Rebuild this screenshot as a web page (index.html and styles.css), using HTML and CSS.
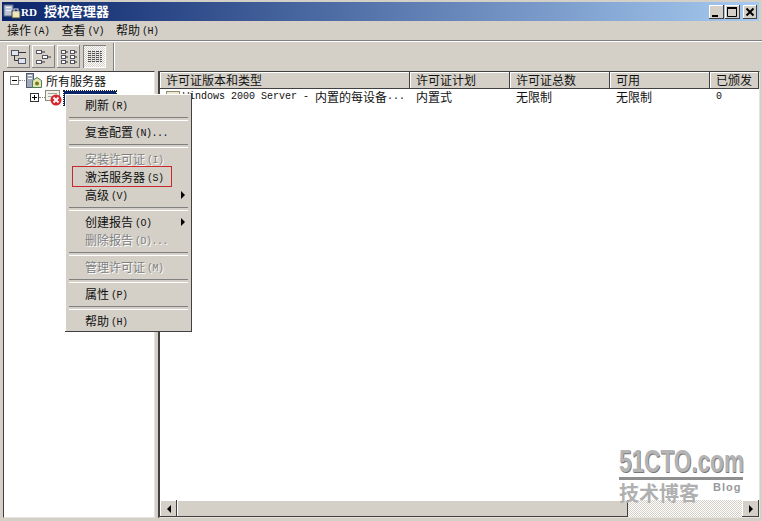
FILE: index.html
```html
<!DOCTYPE html>
<html lang="zh">
<head>
<meta charset="utf-8">
<title>RD 授权管理器</title>
<link rel="stylesheet" href="styles.css">
</head>
<body>
<div class="window">
  <header class="titlebar">
    <svg class="appicon" width="18" height="16" viewBox="0 0 18 16"><rect x="1" y="1" width="9" height="11" fill="#b9c4d4" stroke="#5a6a80"/><rect x="3" y="3" width="5" height="1" fill="#eef"/><rect x="3" y="6" width="5" height="1" fill="#eef"/><rect x="9" y="7" width="8" height="7" fill="#f1e7b0" stroke="#444"/><rect x="11" y="5" width="4" height="3" fill="none" stroke="#ddd"/></svg>
    <span class="title"><span class="tlat">RD</span>授权管理器</span>
    <div class="winbtns">
      <span class="winbtn"><svg width="14" height="14" viewBox="0 0 14 14"><rect x="3" y="10" width="6" height="2" fill="#000"/></svg></span>
      <span class="winbtn"><svg width="14" height="14" viewBox="0 0 14 14"><path d="M2.500 3.500h9v8h-9z" fill="none" stroke="#000"/><rect x="2" y="2" width="10" height="2" fill="#000"/></svg></span>
      <span class="winbtn close"><svg width="14" height="14" viewBox="0 0 14 14"><path d="M3.500 3.500l7 7M10.500 3.500l-7 7" stroke="#000" stroke-width="2"/></svg></span>
    </div>
  </header>
  <nav class="menubar">
    <span class="mi">操作<span class="lat">(A)</span></span>
    <span class="mi">查看<span class="lat">(V)</span></span>
    <span class="mi">帮助<span class="lat">(H)</span></span>
  </nav>
  <div class="toolbar">
    <span class="tb"><svg width="18" height="16" viewBox="0 0 18 16"><rect x="1.500" y="1.500" width="7" height="5" fill="#dfe6ee" stroke="#556"/><rect x="8.500" y="9.500" width="7" height="5" fill="#dfe6ee" stroke="#556"/><path d="M8 3.500h8M4.500 6v5.500H8" stroke="#333" fill="none"/></svg></span>
    <span class="tb"><svg width="18" height="16" viewBox="0 0 18 16"><rect x="1.500" y="1.500" width="5" height="3" fill="#fff" stroke="#556"/><rect x="7.500" y="6.500" width="5" height="3" fill="#fff" stroke="#556"/><rect x="1.500" y="11.500" width="5" height="3" fill="#fff" stroke="#556"/><path d="M6 3h4M12 8h4M6 13h4" stroke="#333"/></svg></span>
    <span class="tb"><svg width="18" height="16" viewBox="0 0 18 16"><g fill="#fff" stroke="#556"><rect x="1.500" y="1.500" width="4" height="3"/><rect x="10.500" y="1.500" width="4" height="3"/><rect x="1.500" y="6.500" width="4" height="3"/><rect x="10.500" y="6.500" width="4" height="3"/><rect x="1.500" y="11.500" width="4" height="3"/><rect x="10.500" y="11.500" width="4" height="3"/></g><path d="M5 3h3M14 3h3M5 8h3M14 8h3M5 13h3M14 13h3" stroke="#333"/></svg></span>
    <span class="tb on"><svg width="18" height="16" viewBox="0 0 18 16"><path d="M2 2.500h14M2 4.500h14M2 6.500h14M2 8.500h14M2 10.500h14M2 12.500h14" stroke="#555"/><path d="M5.500 2v11M9.500 2v11M13.500 2v11" stroke="#ddd"/></svg></span>
    <span class="tbsep"></span>
  </div>
  <main class="content">
    <aside class="tree">
      <div class="node">
        <span class="box"><i class="minus"></i></span><span class="dots"></span>
        <svg class="nicon" width="17" height="17" viewBox="0 0 17 17"><rect x="1.500" y="1.500" width="7" height="14" fill="#9fabbc" stroke="#4f5b6d"/><rect x="3" y="3" width="4" height="1" fill="#fff"/><rect x="3" y="6" width="4" height="1" fill="#fff"/><path d="M7.500 8.500l4.500-3 4.500 3v7h-9z" fill="#e6e6b4" stroke="#4e7d5a"/><circle cx="12" cy="11.500" r="2" fill="#7a7a1e"/></svg>
        <span class="nlabel">所有服务器</span>
      </div>
      <div class="node sub">
        <span class="box"><i class="minus"></i><i class="vert"></i></span><span class="dots"></span>
        <svg class="nicon" width="17" height="17" viewBox="0 0 17 17"><rect x="0.500" y="1.500" width="14" height="10" fill="#f4f1e4" stroke="#8b8b80"/><path d="M3 4.500h9M3 7.500h6" stroke="#9aa"/><circle cx="11" cy="11" r="5.500" fill="#d6272f"/><path d="M8.500 8.500l5 5M13.500 8.500l-5 5" stroke="#fff" stroke-width="1.800"/></svg>
        <span class="selected"></span>
      </div>
    </aside>
    <section class="list">
      <div class="listbody">
        <div class="thead">
          <span class="th c1">许可证版本和类型</span>
          <span class="th c2">许可证计划</span>
          <span class="th c3">许可证总数</span>
          <span class="th c4">可用</span>
          <span class="th c5">已颁发</span>
        </div>
        <div class="row">
          <span class="td c1"><svg class="ficon" width="16" height="14" viewBox="0 0 16 14"><rect x="1.500" y="1.500" width="13" height="10" fill="#efe9cf" stroke="#8c8a78"/><path d="M3 4.500h9M3 7.500h9" stroke="#a8a68f"/></svg><span class="lat14">Windows 2000 Server - </span>内置的每设备<span class="lat14">...</span></span>
          <span class="td c2">内置式</span>
          <span class="td c3">无限制</span>
          <span class="td c4">无限制</span>
          <span class="td c5"><span class="lat14">0</span></span>
        </div>
      </div>
      <div class="hscroll">
        <span class="sbtn"><i class="arrow left"></i></span>
        <span class="thumb"></span>
        <span class="track"></span>
        <span class="sbtn"><i class="arrow right"></i></span>
      </div>
    </section>
  </main>
</div>

<div class="ctx">
  <div class="item">刷新<span class="lat">(R)</span></div>
  <div class="sep"></div>
  <div class="item">复查配置<span class="lat">(N)...</span></div>
  <div class="sep"></div>
  <div class="item off">安装许可证<span class="lat">(I)</span></div>
  <div class="item">激活服务器<span class="lat">(S)</span></div>
  <div class="item">高级<span class="lat">(V)</span><i class="arrow right sub"></i></div>
  <div class="sep"></div>
  <div class="item">创建报告<span class="lat">(O)</span><i class="arrow right sub"></i></div>
  <div class="item off">删除报告<span class="lat">(D)...</span></div>
  <div class="sep"></div>
  <div class="item off">管理许可证<span class="lat">(M)</span></div>
  <div class="sep"></div>
  <div class="item">属性<span class="lat">(P)</span></div>
  <div class="sep"></div>
  <div class="item">帮助<span class="lat">(H)</span></div>
</div>
<div class="redbox"></div>

<div class="wm">
  <div class="wm-logo">51CTO.com</div>
  <div class="wm-rule"></div>
  <div class="wm-foot"><span class="wm-cn">技术博客</span><span class="wm-blog">Blog</span></div>
</div>
</body>
</html>
```
FILE: styles.css
```css
* { box-sizing: border-box; }
html, body { margin: 0; padding: 0; }
body {
  width: 762px; height: 521px; overflow: hidden; position: relative;
  background: #d4d0c8;
  font-family: "Noto Sans CJK SC", "Liberation Sans", sans-serif;
  font-size: 12px; color: #111;
}
i { display: block; font-style: normal; }
.window { width: 762px; height: 521px; display: flex; flex-direction: column; }

.lat { font-family: "Liberation Mono", monospace; font-size: 10px; margin-left: 2px; letter-spacing: -0.5px; position: relative; top: -1px; }
.lat14 { font-family: "Liberation Mono", monospace; font-size: 10px; white-space: pre; }

.titlebar {
  height: 19px; margin: 2px 3px 0 2px; padding: 0 2px 0 1px; flex: none;
  display: flex; align-items: center;
  background: linear-gradient(90deg, #0a246a, #a6caf0);
  color: #fff; font-weight: 700; font-size: 13px; line-height: 19px;
}
.appicon { flex: none; }
.tlat { font-family: "Liberation Serif", serif; font-size: 11px; margin-right: 7px; }
.winbtns { margin-left: auto; display: flex; gap: 1px; }
.winbtn {
  width: 15px; height: 14px; background: #d4d0c8; display: block;
  box-shadow: inset -1px -1px #404040, inset 1px 1px #fff;
}
.winbtn.close { margin-left: 2px; width: 14px; }
.winbtn svg { display: block; }

.menubar {
  height: 20px; flex: none; padding-left: 7px; display: flex; gap: 12px;
  line-height: 19px; align-items: center;
  border-bottom: 1px solid #808080;
}
.mi { white-space: nowrap; }

.toolbar {
  height: 30px; flex: none; border-top: 1px solid #fff; padding: 3px 0 0 7px;
  display: flex; gap: 2px; align-items: flex-start;
}
.tb {
  width: 23px; height: 23px; display: flex; align-items: center; justify-content: center;
  box-shadow: inset -1px -1px #808080, inset 1px 1px #fff;
}
.tb.on {
  margin-left: 1px;
  box-shadow: inset 1px 1px #808080, inset -1px -1px #fff;
  background: repeating-conic-gradient(#fff 0 25%, #d4d0c8 0 50%) 0 0 / 2px 2px;
}
.tbsep {
  width: 2px; height: 28px; margin: -2px 0 0 5px;
  border-left: 1px solid #808080; border-right: 1px solid #fff;
}

.content { flex: 1; display: flex; padding: 0 2px 3px 3px; gap: 3px; min-height: 0; }
.tree {
  width: 152px; flex: none; background: #fff; padding: 0 0 0 6px;
  border: 1px solid #404040; border-right-color: #e6e3dc; border-bottom-color: #e6e3dc;
}
.node { display: flex; align-items: center; height: 17px; line-height: 17px; }
.node.sub { padding-left: 20px; }
.box { width: 9px; height: 9px; border: 1px solid #808080; position: relative; flex: none; background: #fff; }
.sub .box { border-color: #333; }
.minus { position: absolute; left: 1px; top: 3px; width: 5px; height: 1px; background: #000; }
.vert { position: absolute; left: 3px; top: 1px; width: 1px; height: 5px; background: #000; }
.dots { width: 6px; border-top: 1px dotted #808080; flex: none; }
.nicon { flex: none; }
.nlabel { margin-left: 4px; }
.selected {
  width: 52px; height: 14px; margin: 2px 0 0 2px; flex: none; align-self: flex-start;
  background: #0a246a; outline: 1px dotted #222;
}

.list {
  flex: 1; min-width: 0; background: #fff; display: flex; flex-direction: column;
  border: 1px solid #404040; border-left-width: 2px; border-right: 1px solid #e6e3dc; border-bottom: 1px solid #e6e3dc;
}
.listbody { flex: 1; min-height: 0; }
.thead { display: flex; height: 17px; background: #d4d0c8; }
.th {
  line-height: 16px; padding-left: 6px; white-space: nowrap;
  box-shadow: inset -1px -1px #404040, inset 1px 1px #fff;
}
.row { display: flex; height: 15px; line-height: 15px; }
.td { padding-left: 6px; white-space: nowrap; display: flex; align-items: center; }
.c1 { width: 250px; flex: none; }
.c2 { width: 100px; flex: none; }
.c3 { width: 100px; flex: none; }
.c4 { width: 100px; flex: none; }
.c5 { flex: 1; }
.td.c1 { padding-left: 5px; }
.ficon { flex: none; margin-right: 2px; }

.hscroll { height: 17px; flex: none; display: flex; }
.sbtn {
  width: 17px; height: 17px; background: #d4d0c8; flex: none; display: flex; align-items: center; justify-content: center;
  box-shadow: inset -1px -1px #404040, inset 1px 1px #fff;
}
.thumb {
  width: 451px; flex: none; background: #d4d0c8;
  box-shadow: inset -1px -1px #404040, inset 1px 1px #fff;
}
.track { flex: 1; background: repeating-conic-gradient(#fff 0 25%, #d4d0c8 0 50%) 0 0 / 2px 2px; }
.arrow { width: 0; height: 0; border-top: 4px solid transparent; border-bottom: 4px solid transparent; }
.arrow.left { border-right: 4px solid #000; }
.arrow.right { border-left: 4px solid #000; }

.ctx {
  position: absolute; left: 65px; top: 94px; width: 127px; height: 238px; padding: 2px;
  background: #d4d0c8; box-shadow: inset -1px -1px #404040, inset 1px 1px #fff;
}
.item { height: 18px; line-height: 18px; padding-left: 18px; position: relative; white-space: nowrap; }
.item.off { color: #808080; text-shadow: 1px 1px 0 #fff; }
.sep { height: 9px; padding-top: 3px; margin: 0 2px; }
.sep::before { content: ""; display: block; height: 2px; border-top: 1px solid #808080; border-bottom: 1px solid #fff; }
.arrow.sub { position: absolute; right: 5px; top: 5px; }

.redbox {
  position: absolute; left: 72px; top: 166px; width: 100px; height: 21px;
  border: 1px solid #c8282c;
}

.wm { position: absolute; left: 619px; top: 446px; width: 124px; }
.wm-logo {
  font-family: "Liberation Sans", sans-serif; font-weight: 700; font-size: 32px; line-height: 31px;
  color: #b4b4b4; text-shadow: 1px 1px 0 #777;
  transform: scaleX(0.705); transform-origin: 0 0; white-space: nowrap;
}
.wm-rule { height: 3px; background: #8f8f8f; }
.wm-foot { display: flex; align-items: flex-start; margin-top: 2px; }
.wm-cn { font-size: 20px; line-height: 22px; font-weight: 700; color: #b0b0b0; width: 94px; white-space: nowrap; }
.wm-blog { font-family: "Liberation Sans", sans-serif; font-size: 11px; font-weight: 700; line-height: 11px; color: #999; letter-spacing: 1px; }
```
